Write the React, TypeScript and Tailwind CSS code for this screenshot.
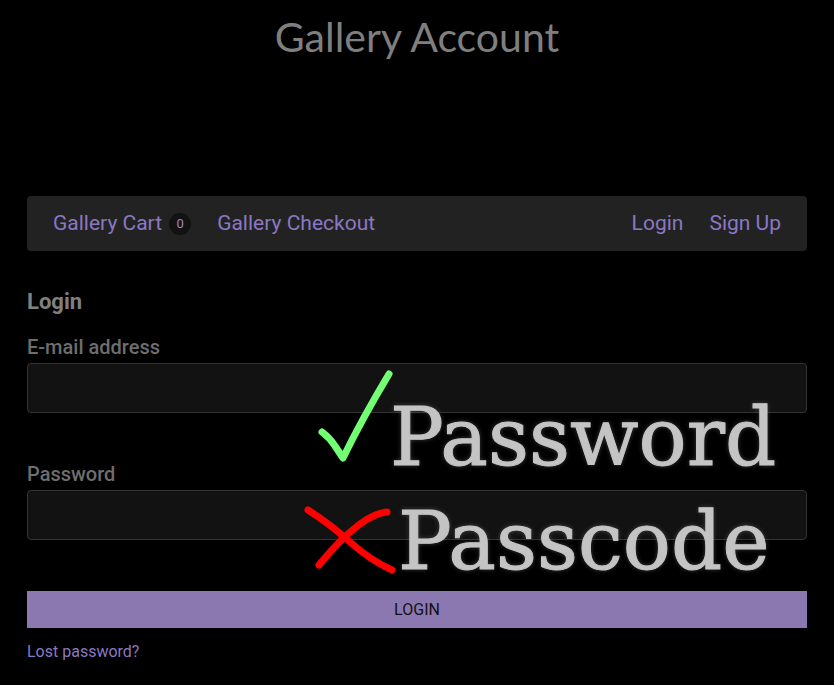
import React from "react";

const roboto = { fontFamily: "Roboto, 'Liberation Sans', sans-serif" };

function Field({ label }: { label: string }) {
  return (
    <div className="flex flex-col">
      <label className="text-[20px] font-medium text-[#6e6e6e] leading-[24px]">{label}</label>
      <input className="mt-[4px] h-[50px] w-full rounded-[4px] border border-[#333] bg-[#121212] outline-none" />
    </div>
  );
}

function Annotation() {
  return (
    <div className="pointer-events-none absolute left-[300px] top-[364px] w-[500px] h-[220px]">
      <svg className="absolute left-0 top-0" width="500" height="220" viewBox="0 0 500 220">
        <path
          d="M22 68 Q30 74 35 82 L43 94 Q62 55 89 10"
          fill="none"
          stroke="#73ff73"
          strokeWidth="7"
          strokeLinecap="round"
          strokeLinejoin="round"
        />
        <path
          d="M8 146 Q30 160 50 178 Q70 196 92 206"
          fill="none"
          stroke="#ff0000"
          strokeWidth="7"
          strokeLinecap="round"
        />
        <path
          d="M19 201 Q40 175 60 160 Q75 149 87 148"
          fill="none"
          stroke="#ff0000"
          strokeWidth="7"
          strokeLinecap="round"
        />
      </svg>
      <div
        className="absolute left-[90px] top-[24px] text-[80px] leading-[100px] text-[#c4c4c4] [-webkit-text-stroke:1px_#c4c4c4] [text-shadow:0_0_5px_rgba(120,120,120,0.6)]"
        style={{ fontFamily: "'DejaVu Serif', 'Liberation Serif', serif" }}
      >
        Password
      </div>
      <div
        className="absolute left-[98px] top-[128px] text-[80px] leading-[100px] text-[#c4c4c4] [-webkit-text-stroke:1px_#c4c4c4] [text-shadow:0_0_5px_rgba(120,120,120,0.6)]"
        style={{ fontFamily: "'DejaVu Serif', 'Liberation Serif', serif" }}
      >
        Passcode
      </div>
    </div>
  );
}

export default function App() {
  return (
    <div className="relative min-h-[685px] w-[834px] bg-black" style={roboto}>
      <h1
        className="pt-[13px] text-center text-[41px] leading-[48px] text-[#7f7f7f]"
        style={{ fontFamily: "Lato, 'Open Sans', sans-serif" }}
      >
        Gallery Account
      </h1>

      <div className="px-[27px]">
        <nav className="mt-[135px] flex h-[55px] items-center justify-between rounded-[4px] bg-[#222] px-[26px] text-[21px] text-[#8a78c4]">
          <div className="flex items-center">
            <span>Gallery Cart</span>
            <span className="ml-[7px] flex h-[22px] w-[22px] items-center justify-center rounded-full bg-[#121212] text-[13px] text-[#9a8ad0]">
              0
            </span>
            <span className="ml-[26px]">Gallery Checkout</span>
          </div>
          <div className="flex items-center gap-[26px]">
            <span>Login</span>
            <span>Sign Up</span>
          </div>
        </nav>

        <h2 className="mt-[38px] text-[22px] font-bold leading-[26px] text-[#808080]">Login</h2>

        <div className="mt-[20px]">
          <Field label="E-mail address" />
        </div>
        <div className="mt-[49px]">
          <Field label="Password" />
        </div>

        <button className="mt-[51px] h-[37px] w-full bg-[#8b78b0] text-[16px] text-[#111]">LOGIN</button>

        <a className="mt-[12px] block text-[16px] text-[#8a78c4]">Lost password?</a>
      </div>

      <Annotation />
    </div>
  );
}
